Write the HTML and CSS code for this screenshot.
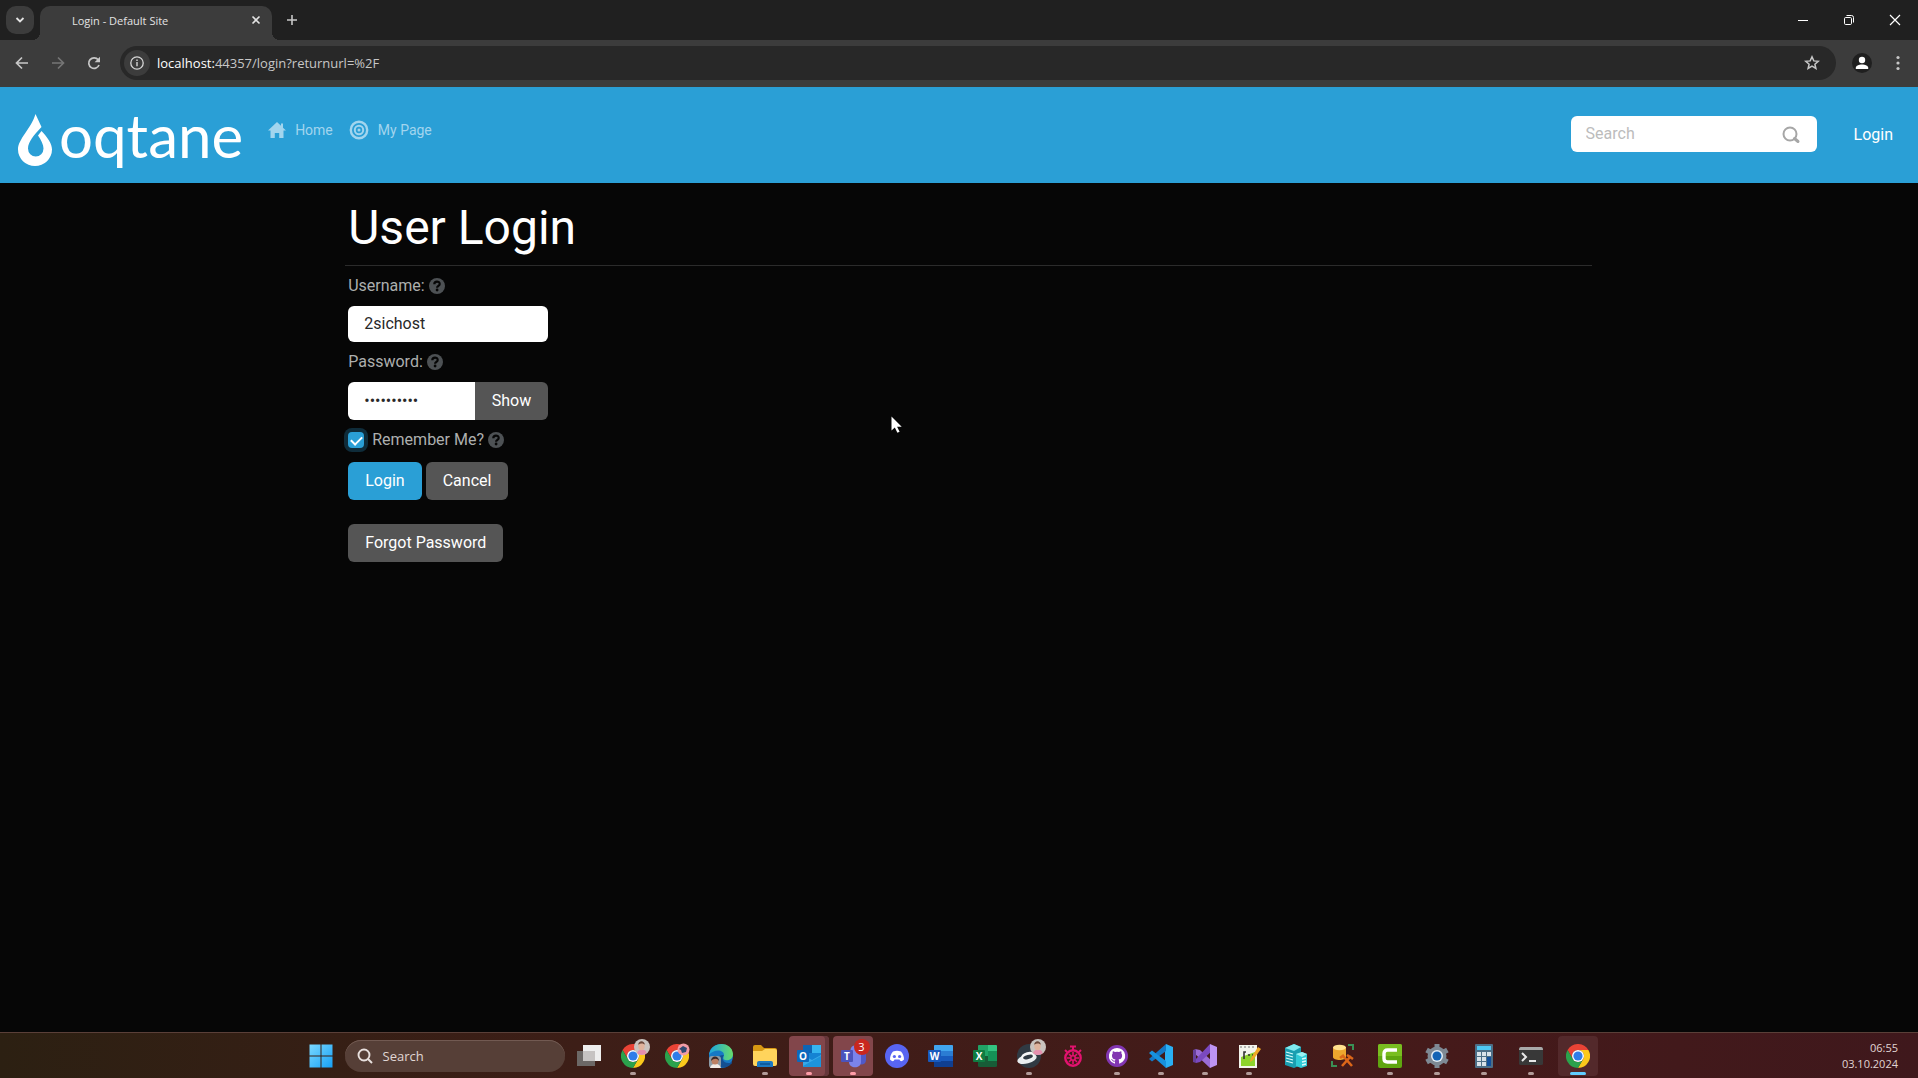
FILE: index.html
```
<!DOCTYPE html>
<html lang="en">
<head>
    <meta charset="UTF-8">
    <meta name="viewport" content="width=device-width, initial-scale=1.0">
    <title>Login - Default Site</title>
    <link rel="stylesheet" href="styles.css">
</head>
<body>
    <!-- shared icon parts -->
    <svg class="defs" width="0" height="0" aria-hidden="true">
        <symbol id="chrome" viewBox="0 0 24 24">
            <path fill="#ea4335" d="M1.6 6A12 12 0 0 1 22.4 6H12A6 6 0 0 0 6.8 15Z"/>
            <path fill="#fbc91c" d="M12 24A12 12 0 0 0 22.4 6H12A6 6 0 0 1 17.2 15Z"/>
            <path fill="#2ba24c" d="M1.6 6A12 12 0 0 0 12 24L17.2 15A6 6 0 0 1 6.8 15Z"/>
            <circle cx="12" cy="12" r="6" fill="#fff"/>
            <circle cx="12" cy="12" r="4.6" fill="#2f7de9"/>
        </symbol>
        <symbol id="avatar" viewBox="0 0 16 16">
            <circle cx="8" cy="8" r="8" fill="#c9c4bf"/>
            <path d="M3 14.2c1-3 3-3.400 5-3.400s4 .4 4.600 3.400A8 8 0 0 1 3 14.200z" fill="#e58fae"/>
            <ellipse cx="7.500" cy="7" rx="3.200" ry="4.300" fill="#dfb49d"/>
            <path d="M4.200 6c0-5 6.600-5 6.600 0-1-2-5-2-6.600 0z" fill="#6b4a3c"/>
        </symbol>
        <symbol id="help" viewBox="0 0 16 16">
            <circle cx="8" cy="8" r="8" fill="#4d5154"/>
            <path d="M5.300 6.200c0-3.500 5.400-3.300 5.400-.3 0 1.900-2.600 1.900-2.600 3.800" fill="none" stroke="#060606" stroke-width="2.200"/>
            <circle cx="8.100" cy="12" r="1.400" fill="#060606"/>
        </symbol>
    </svg>

    <div class="tab-strip">
        <button class="tab-search" aria-label="Search tabs">
            <svg width="12" height="12" viewBox="0 0 12 12"><path d="M2.500 4 6 7.500 9.500 4" fill="none" stroke="#e3e3e3" stroke-width="1.800"/></svg>
        </button>
        <div class="tab">
            <span class="tab-title">Login - Default Site</span>
            <button class="plain-btn" aria-label="Close tab">
                <svg width="10" height="10" viewBox="0 0 10 10"><path d="M1.500 1.500l7 7M8.500 1.500l-7 7" stroke="#e3e3e3" stroke-width="1.600"/></svg>
            </button>
        </div>
        <button class="plain-btn new-tab" aria-label="New tab">
            <svg width="12" height="12" viewBox="0 0 12 12"><path d="M6 1v10M1 6h10" stroke="#c7c7c7" stroke-width="1.600"/></svg>
        </button>
        <div class="window-buttons">
            <button class="plain-btn" aria-label="Minimize"><svg width="10" height="10" viewBox="0 0 10 10"><path d="M0 5.500h10" stroke="#fff"/></svg></button>
            <button class="plain-btn" aria-label="Restore"><svg width="10" height="10" viewBox="0 0 10 10" fill="none" stroke="#fff"><rect x=".5" y="2.500" width="7" height="7" rx="1.200"/><path d="M2.500.5h5a2 2 0 0 1 2 2v5"/></svg></button>
            <button class="plain-btn" aria-label="Close"><svg width="10" height="10" viewBox="0 0 10 10"><path d="M0 0l10 10M10 0 0 10" stroke="#fff" stroke-width="1.200"/></svg></button>
        </div>
    </div>

    <div class="toolbar">
        <button class="plain-btn" aria-label="Back"><svg width="14" height="14" viewBox="0 0 14 14" fill="none" stroke="#c7c7c7" stroke-width="1.700"><path d="M13 7H2M7 1.500 1.500 7 7 12.500"/></svg></button>
        <button class="plain-btn" aria-label="Forward"><svg width="14" height="14" viewBox="0 0 14 14" fill="none" stroke="#757575" stroke-width="1.700"><path d="M1 7h11M7 1.500 12.500 7 7 12.500"/></svg></button>
        <button class="plain-btn" aria-label="Reload"><svg width="14" height="14" viewBox="0 0 14 14"><path d="M12 9a5.300 5.300 0 1 1-.8-5.200" fill="none" stroke="#c7c7c7" stroke-width="1.700"/><path d="M13 .8v5.400H7.600z" fill="#c7c7c7"/></svg></button>
        <div class="address-bar">
            <button class="site-info" aria-label="Site information"><svg width="14" height="14" viewBox="0 0 14 14"><circle cx="7" cy="7" r="6.200" fill="none" stroke="#d6d6d6" stroke-width="1.300"/><path d="M7 6v4.200M7 3.500v1.500" stroke="#d6d6d6" stroke-width="1.400"/></svg></button>
            <span class="url"><span class="host">localhost:</span>44357/login?returnurl=%2F</span>
            <button class="plain-btn bookmark" aria-label="Bookmark"><svg width="16" height="16" viewBox="0 0 16 16"><path d="M8 1.800l1.800 4.100 4.400.4-3.300 2.900 1 4.300L8 11.200l-3.900 2.300 1-4.300L1.800 6.300l4.400-.4z" fill="none" stroke="#c7c7c7" stroke-width="1.500"/></svg></button>
        </div>
        <button class="profile" aria-label="Profile"><svg width="14" height="14" viewBox="0 0 14 14" fill="#fff"><circle cx="7" cy="4" r="3.200"/><path d="M.8 13v-1.200c0-2 3-3.300 6.200-3.300s6.200 1.300 6.200 3.300V13z"/></svg></button>
        <button class="plain-btn menu-btn" aria-label="Menu"><svg width="4" height="16" viewBox="0 0 4 16" fill="#c7c7c7"><circle cx="2" cy="2.500" r="1.600"/><circle cx="2" cy="8" r="1.600"/><circle cx="2" cy="13.500" r="1.600"/></svg></button>
    </div>

    <header class="site-header">
        <a class="logo" href="#">
            <svg width="36" height="54" viewBox="17 113 36 54"><path fill="#fff" d="M35.500 114 41.500 127C34 135 28 142 28 148.500a7.700 8 0 0 0 15.500 0C43.500 144.500 41 140 38 135.500L41.500 131C48 138 52 144 52 149.500a17 16.500 0 0 1-34 0C18 139 31 129 35.500 114z"/></svg>
            <span class="wordmark">oqtane</span>
        </a>
        <nav class="nav">
            <a href="#"><svg width="18" height="16" viewBox="0 0 18 16" fill="currentColor"><path d="M9 0 0 8.500h2.500V16h4.300v-5h4.400v5h4.300V8.500H18l-3-2.800V1.500h-2v2.300z"/></svg>Home</a>
            <a href="#"><svg width="20" height="20" viewBox="0 0 20 20" fill="none" stroke="currentColor"><circle cx="10" cy="10" r="8.200" stroke-width="2.400"/><circle cx="10" cy="10" r="4.200" stroke-width="2"/><circle cx="10" cy="10" r="1.500" fill="currentColor" stroke="none"/></svg>My Page</a>
        </nav>
        <form class="search">
            <input type="search" placeholder="Search" aria-label="Search">
            <button type="button" aria-label="Search"><svg width="18" height="18" viewBox="0 0 18 18" fill="none" stroke="#a6a6a6"><circle cx="8" cy="8" r="6.500" stroke-width="2"/><path d="M12.500 12.500l3.500 3" stroke-width="3" stroke-linecap="round"/></svg></button>
        </form>
        <a class="login-link" href="#">Login</a>
    </header>

    <main class="content">
        <h1>User Login</h1>
        <hr>
        <form class="login-form">
            <div class="label-row"><label for="username">Username:</label><svg width="16" height="16"><use href="#help"/></svg></div>
            <input class="form-control" type="text" id="username" value="2sichost">
            <div class="label-row"><label for="password">Password:</label><svg width="16" height="16"><use href="#help"/></svg></div>
            <div class="input-group">
                <input class="form-control" type="password" id="password" value="abcdefghij">
                <button class="btn" type="button">Show</button>
            </div>
            <div class="label-row remember"><input type="checkbox" id="remember" checked><label for="remember">Remember Me?</label><svg width="16" height="16"><use href="#help"/></svg></div>
            <div class="actions">
                <button class="btn btn-primary" type="button">Login</button>
                <button class="btn" type="button">Cancel</button>
            </div>
            <button class="btn forgot" type="button">Forgot Password</button>
        </form>
    </main>

    <svg class="cursor" width="12" height="18" viewBox="0 0 12 18"><path d="M.5.5v14l3.300-3 2.600 5.300 2.200-1-2.500-5h4.600z" fill="#fff"/></svg>

    <footer class="taskbar">
        <div class="apps">
            <button class="app" aria-label="Start"><svg width="24" height="24" viewBox="0 0 24 24"><defs><linearGradient id="win" x1="0" y1="0" x2="1" y2="1"><stop offset="0" stop-color="#7bd8ff"/><stop offset="1" stop-color="#16a0f5"/></linearGradient></defs><path fill="url(#win)" d="M.5.5h11v11H.5zM12.500.5h11v11h-11zM.5 12.500h11v11H.5zM12.500 12.500h11v11h-11z"/></svg></button>
            <button class="task-search"><svg width="16" height="16" viewBox="0 0 16 16" fill="none" stroke="#e8e0de" stroke-width="1.900"><circle cx="7" cy="7" r="5.500"/><path d="M11 11l4 4"/></svg>Search</button>
            <button class="app" aria-label="Task view"><svg width="24" height="24" viewBox="0 0 24 24"><path d="M0 7h18v15H0z" fill="#6c6866"/><path d="M6 1h18v16H6z" fill="#eee"/><path d="M6 7h12v10H6z" fill="#c6c3c2"/></svg></button>
            <button class="app running" aria-label="Chrome, work profile"><svg width="28" height="30" viewBox="0 0 28 30"><use href="#chrome" x="2" y="3" width="24" height="24"/><use href="#avatar" x="15" y="-2" width="16" height="16"/></svg></button>
            <button class="app" aria-label="Chrome, second profile"><svg width="28" height="30" viewBox="0 0 28 30"><use href="#chrome" x="2" y="3" width="24" height="24"/><circle cx="20.500" cy="8.500" r="6" fill="#f29ca6"/><path d="M16 8l4-3 4 2-1 4-4 1-1-3z" fill="#304a72"/></svg></button>
            <button class="app" aria-label="Edge"><svg width="24" height="24" viewBox="0 0 24 24"><defs><linearGradient id="edge"><stop offset="0" stop-color="#1ba3e2"/><stop offset="1" stop-color="#68dc69"/></linearGradient></defs><circle cx="12" cy="12" r="12" fill="#1679c5"/><path d="M0 11C1-3 23-4 24 10c0 5-4 7-8 6-3-1-1-3-1-5 0-6-11-6-15 0z" fill="url(#edge)"/><path d="M15 11c-3 3-1 9 6 8l1-1c1 0 2 1 0 2-3 4-9 5-13 1-4-5-1-10 6-10z" fill="#144f91"/><rect x="0" y="12" width="12" height="12" rx="3" fill="#8d9ba6"/><path d="M1 24c1-5 9-6 11 0z" fill="#f2ebe6"/><circle cx="6" cy="17" r="3.500" fill="#bc8064"/><path d="M2 17c0-6 8-6 8 0-2-3-5-3-8 0z" fill="#3c2928"/></svg></button>
            <button class="app running" aria-label="File Explorer"><svg width="26" height="24" viewBox="0 0 26 24"><path d="M1 3q0-2 2-2h6l3 3h11q2 0 2 2v6H1z" fill="#d79813"/><path d="M1 7h9l3-2h10q2 0 2 2v13q0 2-2 2H3q-2 0-2-2z" fill="#ffd45c"/><path d="M5 23v-4q0-2 2-2h12q2 0 2 2v4z" fill="#1a78c2"/><path d="M8 19h10v2H8z" fill="#0c5ba0"/></svg></button>
            <button class="app running alert stacked" aria-label="Outlook"><svg width="26" height="24" viewBox="0 0 26 24"><rect x="7" y="1" width="18" height="21" rx="1.500" fill="#1583d3"/><path d="M7 1h9v8H7z" fill="#0e65b4"/><path d="M16 1h9v8h-9z" fill="#35b4ef"/><path d="M7 11l9 5 9-5v11H7z" fill="#38a9e8"/><path d="M7 22l18-10v11H7z" fill="#1d94dc"/><rect x="1" y="6" width="12" height="12" rx="1" fill="#0b69bd"/><text x="7" y="16" class="tile-letter">O</text></svg></button>
            <button class="app running alert" aria-label="Teams, 3 notifications"><svg width="26" height="24" viewBox="0 0 26 24"><circle cx="15" cy="6" r="4.500" fill="#7b83eb"/><circle cx="22" cy="7" r="3" fill="#5059c9"/><path d="M17 10h9v6c0 6-9 6-9 0z" fill="#5059c9"/><path d="M9 10h12v8c0 7-12 7-12 0z" fill="#7b83eb"/><rect x="1" y="6" width="12" height="12" rx="1" fill="#4b53bc"/><text x="7" y="16" class="tile-letter">T</text></svg><span class="badge">3</span></button>
            <button class="app" aria-label="Discord"><svg width="24" height="24" viewBox="0 0 24 24"><circle cx="12" cy="12" r="12" fill="#5865f2"/><path d="M8 7.500c3-1 5-1 8 0 2 2 3 5 3 8-2 2-3 2-4 1l-.5-1h-5l-.5 1c-1 1-2 1-4-1 0-3 1-6 3-8z" fill="#fff"/><circle cx="9.400" cy="12.500" r="1.600" fill="#5865f2"/><circle cx="14.600" cy="12.500" r="1.600" fill="#5865f2"/></svg></button>
            <button class="app" aria-label="Word"><svg width="26" height="24" viewBox="0 0 26 24"><rect x="6" y="1" width="19" height="22" rx="1.500" fill="#185abd"/><path d="M6 2q0-1 1-1h17q1 0 1 1v5H6z" fill="#41a5ee"/><path d="M6 7h19v5H6z" fill="#2b7cd3"/><path d="M6 17h19v5q0 1-1 1H7q-1 0-1-1z" fill="#103f91"/><rect x="0" y="6" width="13" height="12" rx="1" fill="#185abd"/><text x="6.500" y="16" class="tile-letter">W</text></svg></button>
            <button class="app" aria-label="Excel"><svg width="26" height="24" viewBox="0 0 26 24"><rect x="6" y="1" width="19" height="22" rx="1.500" fill="#185c37"/><path d="M6 2q0-1 1-1h9v11H6z" fill="#21a366"/><path d="M16 1h8q1 0 1 1v5h-9z" fill="#33c481"/><path d="M16 7h9v10h-9z" fill="#159257"/><rect x="1" y="6" width="12" height="12" rx="1" fill="#107c41"/><text x="7" y="16" class="tile-letter">X</text></svg></button>
            <button class="app running" aria-label="Drive viewer"><svg width="28" height="30" viewBox="0 0 28 30"><circle cx="14" cy="15" r="12" fill="#303a43"/><ellipse cx="12" cy="18" rx="10" ry="4.500" fill="#e9eef0" transform="rotate(-15 12 18)"/><ellipse cx="13" cy="15" rx="7" ry="4" fill="#f6f6f6" transform="rotate(-15 13 15)"/><ellipse cx="13" cy="16" rx="5" ry="2" fill="#303a43" transform="rotate(-15 13 16)"/><use href="#avatar" x="15" y="-2" width="16" height="16"/></svg></button>
            <button class="app" aria-label="Stopwatch"><svg width="22" height="26" viewBox="0 0 22 26" fill="none" stroke="#e3126f"><circle cx="11" cy="15" r="7.700" stroke-width="2.400"/><path d="M11 7V4M8 3.500h6M3 7l2 2M19 7l-2 2" stroke-width="2"/><path d="M11 9v12M5 15h12M7 11l8 8M15 11l-8 8" stroke-width="1.600"/><circle cx="11" cy="15" r="2.200" fill="#411a17" stroke-width="1.500"/></svg></button>
            <button class="app running" aria-label="GitHub Desktop"><svg width="24" height="24" viewBox="0 0 24 24"><circle cx="12" cy="12" r="11" fill="#8236b2"/><path fill="#fff" d="M12 4a8 8 0 0 0-2.600 15.600c.5.1.6-.2.6-.4v-1.600c-2.200.5-2.700-1-2.700-1-.5-1-1-1.200-1-1.200-.7-.5 0-.5 0-.5 1 .1 1.300.9 1.300.9.8 1.300 2 .9 2.400.7l.5-1.100c-1.800-.3-3.500-1-3.500-4 0-.9.300-1.600.8-2.100-.1-.3-.4-1 .1-2.100 0 0 .7-.2 2.200.8a8 8 0 0 1 3.900 0c1.500-1 2.200-.8 2.200-.8.5 1.100.2 1.800.1 2.100.5.600.8 1.200.8 2.100 0 3-1.700 3.700-3.500 4l.5 1.500v2.300c0 .2.100.5.600.4A8 8 0 0 0 12 4z"/></svg></button>
            <button class="app running" aria-label="Visual Studio Code"><svg width="24" height="24" viewBox="0 0 24 24"><path d="M17 0 24 3v18l-7 3-1-6V6z" fill="#29b0f4"/><path d="M17 0v7L3 17.500 0 15z" fill="#1379c7"/><path d="M3 6.500 17 17v7L0 9z" fill="#1791dd"/></svg></button>
            <button class="app running" aria-label="Visual Studio"><svg width="24" height="24" viewBox="0 0 24 24"><path d="M2 5l5 1 12 11-2 7L1 9z" fill="#9a6cd5"/><path d="M17 0 2 16l1 3 4-1L19 7z" fill="#7a49bf"/><path d="M0 6l3-1v14l-3-1z" fill="#66409b"/><path d="M17 0l7 3v18l-7 3z" fill="#bd94f2"/></svg></button>
            <button class="app running" aria-label="Notepad++"><svg width="24" height="26" viewBox="0 0 24 26"><path d="M2 2h18v23H2z" fill="#f3f4ed"/><path d="M4 14l14-5v14H4z" fill="#8ed32c"/><path d="M3 4h2M7 4h2M11 4h2M15 4h2" stroke="#777"/><path d="M7 16V9h2M11 12h2M15 12h1" stroke="#333" stroke-width="1.600" fill="none"/><path d="M21 4l3 2-8 11-3 2 1-4z" fill="#f0a925"/></svg></button>
        </div>
        <div class="apps apps-wide">
            <button class="app" aria-label="Servers"><svg width="24" height="24" viewBox="0 0 24 24"><path d="M1 4l9-4 7 3v18l-7 3-9-3z" fill="#1a9eb0"/><path d="M1 4l9-4 7 3-7 4z" fill="#80e9ef"/><path d="M12 10l6-2 5 2v12l-6 2-5-2z" fill="#30cbd7"/><path d="M12 10l6-2 5 2-5 3z" fill="#9bf3f4"/><path d="M2 8l7 2M2 11l7 2M2 14l7 2M2 17l7 2M18 15l4-1M18 18l4-1M18 21l4-1" stroke="#d8fbfb" stroke-width="1.300"/></svg></button>
            <button class="app" aria-label="Database tools"><svg width="24" height="24" viewBox="0 0 24 24"><path d="M2 3v10c0 4 13 4 13 0V3z" fill="#eda72e"/><ellipse cx="8.500" cy="3.500" rx="6.500" ry="2.800" fill="#ffe18e"/><path d="M17 1h5v5M1 17v5h5" fill="none" stroke="#3a9156" stroke-width="2"/><path d="M11 22l9-10M12 12l9 10M9 14l4-3M16 11l6 4" stroke="#dc6719" stroke-width="2.600"/></svg></button>
            <button class="app running" aria-label="Camtasia"><svg width="24" height="24" viewBox="0 0 24 24"><rect width="24" height="24" rx="2" fill="#5fa610"/><path d="M0 2q0-2 2-2h20q2 0 2 2v10H0z" fill="#79be20"/><path d="M19 6H9.500Q6 6 6 9.500v5Q6 18 9.500 18H19" fill="none" stroke="#fff" stroke-width="3.400"/></svg></button>
            <button class="app running" aria-label="Settings"><svg width="24" height="24" viewBox="0 0 24 24"><circle cx="12" cy="12" r="9.500" fill="#7e8994"/><path d="M12 0v24M1.600 6l20.800 12M22.400 6 1.600 18" stroke="#7e8994" stroke-width="5"/><circle cx="12" cy="12" r="6" fill="#e3edf5"/><circle cx="12" cy="12" r="4.500" fill="#1263b5"/></svg></button>
            <button class="app running" aria-label="Calculator"><svg width="18" height="24" viewBox="0 0 18 24"><rect width="18" height="24" rx="1" fill="#4d6e86"/><path d="M2 2h14v4H2z" fill="#4ec8f4"/><path d="M2 8h4v4H2zM7 8h4v4H7zM12 8h4v4h-4zM2 13h4v4H2zM7 13h4v4H7zM2 18h4v4H2zM7 18h4v4H7z" fill="#d9e2e9"/><path d="M12 13h4v9h-4z" fill="#114f9b"/></svg></button>
            <button class="app running" aria-label="Terminal"><svg width="26" height="18" viewBox="0 0 26 18"><rect x="1" width="24" height="18" rx="1.500" fill="#383838"/><path d="M1 3q0-3 2-3h20q2 0 2 3z" fill="#a9a9a9"/><path d="M4 6l4 4-4 4M11 14h7" fill="none" stroke="#e8e8e8" stroke-width="2"/></svg></button>
            <button class="app running current" aria-label="Chrome"><svg width="24" height="24"><use href="#chrome"/></svg></button>
        </div>
        <div class="clock"><div>06:55</div><div>03.10.2024</div></div>
    </footer>
</body>
</html>
```
FILE: styles.css
```
* {
    box-sizing: border-box;
}
body {
    display: flex;
    flex-direction: column;
    min-height: 100vh;
    margin: 0;
    background-color: #060606;
    color: #adafae;
    font-family: Roboto, Arial, sans-serif;
    font-size: 16px;
    line-height: 24px;
}
a {
    text-decoration: none;
}
button {
    border: none;
    padding: 0;
    font: inherit;
    color: inherit;
    background: none;
    cursor: pointer;
}
svg {
    display: block;
    flex: none;
    overflow: visible;
}
.defs {
    position: absolute;
}

/* browser */
.tab-strip,
.toolbar,
.taskbar {
    font-family: "Open Sans", "Noto Sans", sans-serif;
    font-size: 13px;
    line-height: 16px;
}
.plain-btn {
    display: flex;
    align-items: center;
    justify-content: center;
    width: 28px;
    height: 28px;
}
.tab-strip {
    display: flex;
    align-items: flex-start;
    height: 40px;
    padding: 6px 0 0 6px;
    background-color: #202020;
}
.tab-search {
    display: flex;
    align-items: center;
    justify-content: center;
    width: 28px;
    height: 28px;
    border-radius: 10px;
    background-color: #3c3c3c;
}
.tab {
    position: relative;
    display: flex;
    align-items: flex-start;
    justify-content: space-between;
    width: 232px;
    height: 34px;
    margin-left: 6px;
    padding: 0 2px 0 32px;
    border-radius: 10px 10px 0 0;
    background-color: #3c3c3c;
}
.tab::before,
.tab::after {
    content: "";
    position: absolute;
    bottom: 0;
    width: 8px;
    height: 8px;
}
.tab::before {
    right: 100%;
    background: radial-gradient(circle at 0 0, transparent 8px, #3c3c3c 8px);
}
.tab::after {
    left: 100%;
    background: radial-gradient(circle at 100% 0, transparent 8px, #3c3c3c 8px);
}
.tab-title {
    color: #e3e3e3;
    font-size: 11px;
    line-height: 30px;
}
.new-tab {
    margin-left: 6px;
}
.window-buttons {
    display: flex;
    margin-left: auto;
}
.window-buttons .plain-btn {
    width: 46px;
}
.toolbar {
    display: flex;
    align-items: center;
    gap: 8px;
    height: 47px;
    padding: 0 6px 2px 8px;
    background-color: #3c3c3c;
}
.address-bar {
    display: flex;
    flex: 1;
    align-items: center;
    height: 34px;
    margin-left: 4px;
    padding: 0 10px 0 4px;
    border-radius: 17px;
    background-color: #282828;
}
.site-info {
    display: flex;
    align-items: center;
    justify-content: center;
    width: 26px;
    height: 26px;
    margin-right: 7px;
    border-radius: 50%;
    background-color: #3c3c3c;
}
.url {
    color: #c7c7c7;
}
.host {
    color: #fff;
}
.bookmark {
    margin-left: auto;
}
.profile {
    display: flex;
    align-items: center;
    justify-content: center;
    width: 20px;
    height: 20px;
    margin-left: 8px;
    border-radius: 50%;
    background-color: #1f1f1f;
}
.menu-btn {
    margin-left: 4px;
}

/* site header */
.site-header {
    display: flex;
    align-items: flex-start;
    height: 96px;
    padding: 26px 25px 0 17px;
    background-color: #2a9fd6;
}
.logo {
    display: flex;
    align-items: flex-start;
    gap: 6px;
    color: #fff;
}
.wordmark {
    font-family: Lato, sans-serif;
    font-size: 60px;
    line-height: 44px;
}
.nav {
    display: flex;
    gap: 16px;
    margin-left: 25px;
}
.nav a {
    display: flex;
    align-items: center;
    gap: 9px;
    height: 34px;
    color: #a2d5ee;
    font-size: 14px;
    line-height: 36px;
}
.search {
    position: relative;
    width: 246px;
    margin: 3px 0 0 auto;
}
.search input {
    width: 100%;
    height: 36px;
    padding: 0 44px 2px 15px;
    border: none;
    border-radius: 6px;
    background-color: #fff;
    color: #282828;
    font: inherit;
}
.search input::placeholder {
    color: #bcbcbc;
}
.search button {
    position: absolute;
    top: 10px;
    right: 17px;
}
.login-link {
    margin: 10px 0 0 37px;
    color: #fff;
}

/* login page */
.content {
    flex: 1;
    padding: 16px 17% 0 18%;
}
h1 {
    margin: 0;
    padding: 0 3px;
    color: #fff;
    font-size: 48px;
    font-weight: 400;
    line-height: 58px;
}
hr {
    margin: 8px 0;
    border: none;
    border-top: 1px solid #2b2b2b;
}
.login-form {
    padding: 0 3px;
}
.label-row {
    display: flex;
    align-items: center;
    gap: 4px;
    height: 24px;
    margin-bottom: 8px;
}
.form-control {
    display: block;
    width: 200px;
    height: 36px;
    margin-bottom: 8px;
    padding: 0 16px 2px;
    border: none;
    border-radius: 6px;
    background-color: #fff;
    color: #282828;
    font: inherit;
}
.input-group {
    display: flex;
    width: 200px;
    margin-bottom: 8px;
}
.input-group .form-control {
    flex: 1;
    min-width: 0;
    height: 38px;
    margin: 0;
    border-radius: 6px 0 0 6px;
}
.input-group .btn {
    border-radius: 0 6px 6px 0;
}
.btn {
    height: 38px;
    padding: 0 17px;
    border-radius: 6px;
    background-color: #555;
    color: #fff;
}
.btn-primary {
    background-color: #2a9fd6;
}
.remember {
    margin-bottom: 10px;
}
.remember label {
    margin-left: 4px;
}
.remember input {
    appearance: none;
    width: 16px;
    height: 16px;
    margin: 0;
    border-radius: 4px;
    background-color: #2a9fd6;
    box-shadow: 0 0 0 4px rgba(42, 159, 214, 0.25);
}
.remember input:checked {
    display: grid;
    place-items: center;
}
.remember input:checked::before {
    content: "";
    width: 9px;
    height: 5px;
    margin-bottom: 2px;
    border: solid #fff;
    border-width: 0 0 2px 2px;
    transform: rotate(-45deg);
}
.actions {
    display: flex;
    gap: 4px;
    margin-bottom: 24px;
}
.cursor {
    position: absolute;
    left: 891px;
    top: 416px;
}

/* taskbar */
.taskbar {
    display: grid;
    grid-template-columns: 1fr auto auto 1fr;
    height: 46px;
    padding-right: 20px;
    border-top: 1px solid #5a3f38;
    background: linear-gradient(90deg, #2c2012, #3d1e17 30%, #451a1a 75%, #3f181c);
    color: #e0d6d4;
}
.apps {
    display: flex;
    grid-column: 2;
    align-items: center;
    gap: 4px;
}
.apps-wide {
    grid-column: 3;
    gap: 7px;
    padding-left: 7px;
}
.app {
    position: relative;
    display: flex;
    align-items: center;
    justify-content: center;
    width: 40px;
    height: 40px;
    border-radius: 4px;
}
.task-search {
    display: flex;
    align-items: center;
    gap: 10px;
    width: 220px;
    height: 32px;
    padding: 0 12px;
    border-radius: 16px;
    background-color: #563f37;
    box-shadow: inset 0 1px #725a52;
}
.running::after {
    content: "";
    position: absolute;
    bottom: 1px;
    width: 6px;
    height: 3px;
    border-radius: 2px;
    background-color: #b29b99;
}
.alert {
    background-color: #82464b;
}
.alert::after {
    background-color: #ff9da8;
}
.stacked {
    box-shadow: inset -4px 0 #65363a;
}
.current {
    background-color: #53292b;
}
.current::after {
    width: 16px;
    background-color: #60cdff;
}
.badge {
    position: absolute;
    top: 3px;
    right: 3px;
    width: 16px;
    height: 16px;
    border-radius: 8px;
    background-color: #c9271e;
    color: #fff;
    font-size: 11px;
}
.tile-letter {
    fill: #fff;
    font: bold 10px "Open Sans", sans-serif;
    text-anchor: middle;
}
.clock {
    grid-column: 4;
    align-self: center;
    font-size: 11px;
    text-align: right;
}
```
